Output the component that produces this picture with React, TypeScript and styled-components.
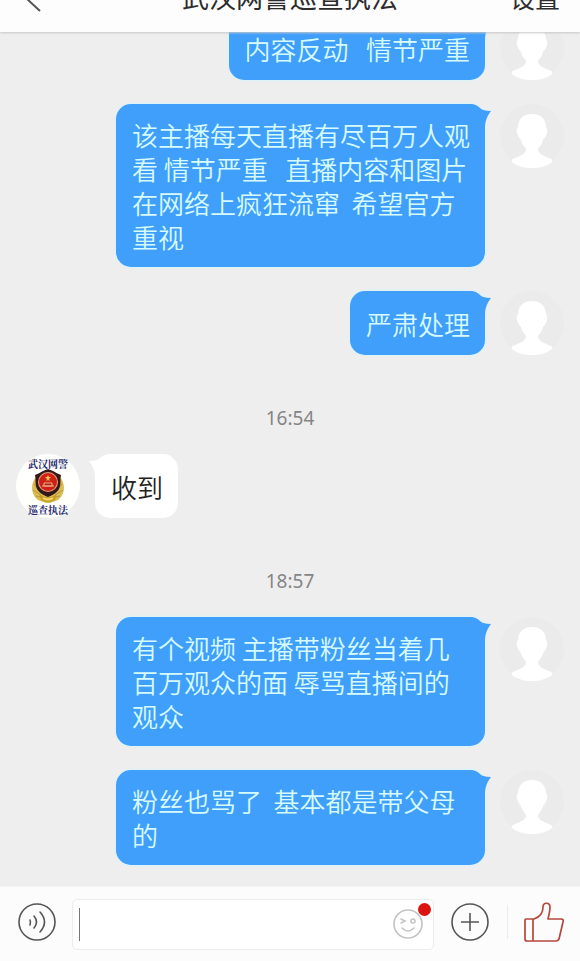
import React from "react";
import styled, { createGlobalStyle, css } from "styled-components";

const GlobalStyle = createGlobalStyle`
  * { box-sizing: border-box; }
  body {
    margin: 0;
    background: #eeeeee;
    font-family: "Noto Sans CJK SC", "Noto Sans", sans-serif;
  }
  button, input { font: inherit; }
`;

const Screen = styled.div`
  display: flex;
  flex-direction: column;
  height: 100vh;
  overflow: hidden;
`;

const Header = styled.header`
  position: relative;
  z-index: 1;
  flex: none;
  display: grid;
  grid-template-columns: 1fr auto 1fr;
  align-content: end;
  align-items: end;
  height: 32px;
  padding: 0 20px 19px;
  background: #fdfdfd;
  box-shadow: 0 1px 2px #c8c8c8;
`;

const Title = styled.h1`
  margin: 0;
  font-size: 27px;
  line-height: 32px;
  font-weight: 400;
  color: #2c2c2c;
`;

const PlainButton = styled.button`
  display: flex;
  padding: 0;
  border: 0;
  background: none;
  color: #555555;
  cursor: pointer;
`;

const BackButton = styled(PlainButton)`
  justify-self: start;
`;

const SettingsButton = styled(PlainButton)`
  justify-self: end;
  font-size: 25px;
  line-height: 32px;
  color: #2c2c2c;
`;

const Chat = styled.main`
  flex: 1;
  min-height: 0;
  display: flex;
  flex-direction: column;
  justify-content: flex-end;
  gap: 24px;
  padding: 0 16px 21px;
  overflow: hidden;
`;

const Row = styled.div<{ $mine: boolean }>`
  flex: none;
  display: flex;
  flex-direction: ${(p) => (p.$mine ? "row-reverse" : "row")};
  align-items: flex-start;
  gap: 15px;
  ${(p) => (p.$mine ? "padding-left: 100px;" : "padding-right: 100px;")}
`;

const Bubble = styled.div<{ $mine: boolean }>`
  position: relative;
  display: flex;
  align-items: center;
  min-height: 64px;
  padding: 14px 15px 13px 16px;
  border-radius: 15px;
  font-size: 26px;
  line-height: 34px;
  font-weight: 350;
  white-space: pre-wrap;
  ${(p) =>
    p.$mine
      ? css`
          background: #419ffc;
          color: #d6fbff;
          box-shadow: 0 0 2px 1px #daf3f9;
        `
      : css`
          background: #ffffff;
          color: #222222;
        `}
`;

const Tail = styled.svg<{ $mine: boolean }>`
  position: absolute;
  top: 0;
  ${(p) => (p.$mine ? "right: -6px;" : "left: -6px; transform: scaleX(-1);")}
`;

const Time = styled.time`
  flex: none;
  align-self: center;
  padding-top: 27px;
  font-family: "Noto Sans", sans-serif;
  font-size: 19px;
  line-height: 24px;
  color: #858585;
`;

const Avatar = styled.div<{ $fill: string }>`
  flex: none;
  display: flex;
  flex-direction: column;
  align-items: center;
  justify-content: center;
  width: 64px;
  height: 64px;
  border-radius: 50%;
  background: ${(p) => p.$fill};
`;

const BadgeText = styled.span`
  font-family: "Noto Serif CJK SC", "Noto Sans CJK SC", serif;
  font-size: 10px;
  line-height: 11px;
  font-weight: 700;
  white-space: nowrap;
  color: #25286f;
`;

const Footer = styled.footer`
  flex: none;
  display: flex;
  align-items: center;
  height: 75px;
  padding: 0 16px 4px 18px;
  border-top: 1px solid #f6f6f6;
  background: #fcfcfc;
`;

const Field = styled.label`
  position: relative;
  flex: 1;
  min-width: 0;
  display: flex;
  align-items: center;
  height: 51px;
  margin: 4px 17px 0 16px;
  padding: 0 10px 0 6px;
  border: 1px solid #ececec;
  border-radius: 5px;
  background: #ffffff;
`;

const Caret = styled.span`
  width: 1px;
  height: 33px;
  background: #777777;
`;

const TextInput = styled.input`
  flex: 1;
  min-width: 0;
  height: 40px;
  border: 0;
  outline: 0;
  background: none;
  font-size: 26px;
`;

const Dot = styled.span`
  position: absolute;
  top: 3px;
  right: 2px;
  width: 13px;
  height: 13px;
  border-radius: 50%;
  background: #dc1410;
`;

const Divider = styled.span`
  width: 1px;
  height: 34px;
  margin: 0 16px 0 18px;
  background: #ececec;
`;

const Person = () => (
  <Avatar $fill="#ebebeb">
    <svg width="64" height="64" viewBox="0 0 64 64" aria-hidden="true">
      <path
        fill="#fff"
        d="M32 10C40 10 45 14 46 22C46 24 48 25 47 29C46 32 45 34 43 36C42 40 40 42 38 45C38 50 44 52 49 54C52 55 53 56 52 58C47 62 40 64 32 64C24 64 17 62 12 58C11 56 12 55 15 54C20 52 26 50 26 45C24 42 22 40 21 36C19 34 18 32 17 29C16 25 18 24 18 22C19 14 24 10 32 10Z"
      />
    </svg>
  </Avatar>
);

const Police = () => (
  <Avatar $fill="#fffffc">
    <BadgeText>武汉网警</BadgeText>
    <svg width="34" height="35" viewBox="0 0 34 35" aria-hidden="true">
      <path d="M5 8C-1 15 0 26 7 31L15 34H19L27 31C34 26 35 15 29 8L26 20L17 27L8 20Z" fill="#d9bd52" />
      <path d="M3 15l6 7M2 21l8 5M5 27l8 2M31 15l-6 7M32 21l-8 5M29 27l-8 2" stroke="#b8953c" strokeWidth="1" />
      <path d="M17 0L22 2C25 4 28 5 30 6C29 10 30 13 29 17C28 23 22 26 17 28C12 26 6 23 5 17C4 13 5 10 4 6C6 5 9 4 12 2Z" fill="#35191a" />
      <circle cx="17" cy="13" r="10" fill="#e9a178" />
      <circle cx="17" cy="13" r="9" fill="#cf2018" />
      <path d="M17 6l1 2h2l-2 2 1 2-2-1-2 1 1-2-2-2h2z" fill="#f0bd55" />
      <path d="M11 17h12M13 14h8v3h-8z" stroke="#efb080" fill="#aa2018" />
      <path d="M8 25Q17 32 26 25L24 31Q17 35 10 31Z" fill="#c79d28" />
      <path d="M12 29Q17 32 22 29" stroke="#f3dc6c" strokeWidth="2" fill="none" />
    </svg>
    <BadgeText>巡查执法</BadgeText>
  </Avatar>
);

const Message = ({ text, mine = true }: { text: string; mine?: boolean }) => (
  <Row $mine={mine}>
    {mine ? <Person /> : <Police />}
    <Bubble $mine={mine}>
      <Tail $mine={mine} width="20" height="26" viewBox="0 0 20 26" aria-hidden="true">
        <path d="M0 0C5 1 8 7 20 7C17 11 14 16 14 24L0 20Z" fill={mine ? "#419ffc" : "#fff"} />
      </Tail>
      <span>{text}</span>
    </Bubble>
  </Row>
);

export default function App() {
  return (
    <>
      <GlobalStyle />
      <Screen>
        <Header>
          <BackButton aria-label="返回">
            <svg width="42" height="26" viewBox="0 0 42 26" fill="none" stroke="currentColor" strokeWidth="2">
              <path d="M19 -1L6 11L20 24M6 11H40" />
            </svg>
          </BackButton>
          <Title>武汉网警巡查执法</Title>
          <SettingsButton>设置</SettingsButton>
        </Header>
        <Chat>
          <Message text="内容反动   情节严重" />
          <Message text="该主播每天直播有尽百万人观看 情节严重   直播内容和图片在网络上疯狂流窜  希望官方重视" />
          <Message text="严肃处理" />
          <Time>16:54</Time>
          <Message mine={false} text="收到" />
          <Time>18:57</Time>
          <Message text="有个视频 主播带粉丝当着几百万观众的面 辱骂直播间的观众" />
          <Message text="粉丝也骂了  基本都是带父母的" />
        </Chat>
        <Footer>
          <PlainButton aria-label="语音">
            <svg width="38" height="38" viewBox="0 0 38 38" fill="none" stroke="currentColor" strokeWidth="1.6" strokeLinecap="round">
              <circle cx="19" cy="19" r="18" />
              <path d="M12 17Q13 19 12 22M16 13Q21 19 16 25M22 9Q31 19 22 29" />
            </svg>
          </PlainButton>
          <Field>
            <Caret />
            <TextInput aria-label="消息" />
            <PlainButton aria-label="表情">
              <svg width="30" height="30" viewBox="0 0 30 30" fill="none" stroke="#c4c4c4" strokeWidth="1.6" strokeLinecap="round">
                <circle cx="15" cy="15" r="14" />
                <path d="M8 10l4 2-4 2M9 19Q15 25 21 19" />
                <circle cx="20" cy="12" r="2" />
              </svg>
            </PlainButton>
            <Dot />
          </Field>
          <PlainButton aria-label="更多">
            <svg width="38" height="38" viewBox="0 0 38 38" fill="none" stroke="currentColor" strokeWidth="1.6">
              <circle cx="19" cy="19" r="18" />
              <path d="M10 19H28M19 10V28" />
            </svg>
          </PlainButton>
          <Divider />
          <PlainButton aria-label="点赞">
            <svg width="40" height="40" viewBox="0 0 40 40" fill="none" stroke="#b5483c" strokeWidth="1.7" strokeLinejoin="round">
              <path d="M1 18Q1 17 2 17H10C16 15 19 11 19 5C19 0 26 0 26 5C26 9 25 13 24 17H37Q40 17 39 20L35 37Q34 39 32 39H3Q1 39 1 37ZM9 17V39" />
            </svg>
          </PlainButton>
        </Footer>
      </Screen>
    </>
  );
}
